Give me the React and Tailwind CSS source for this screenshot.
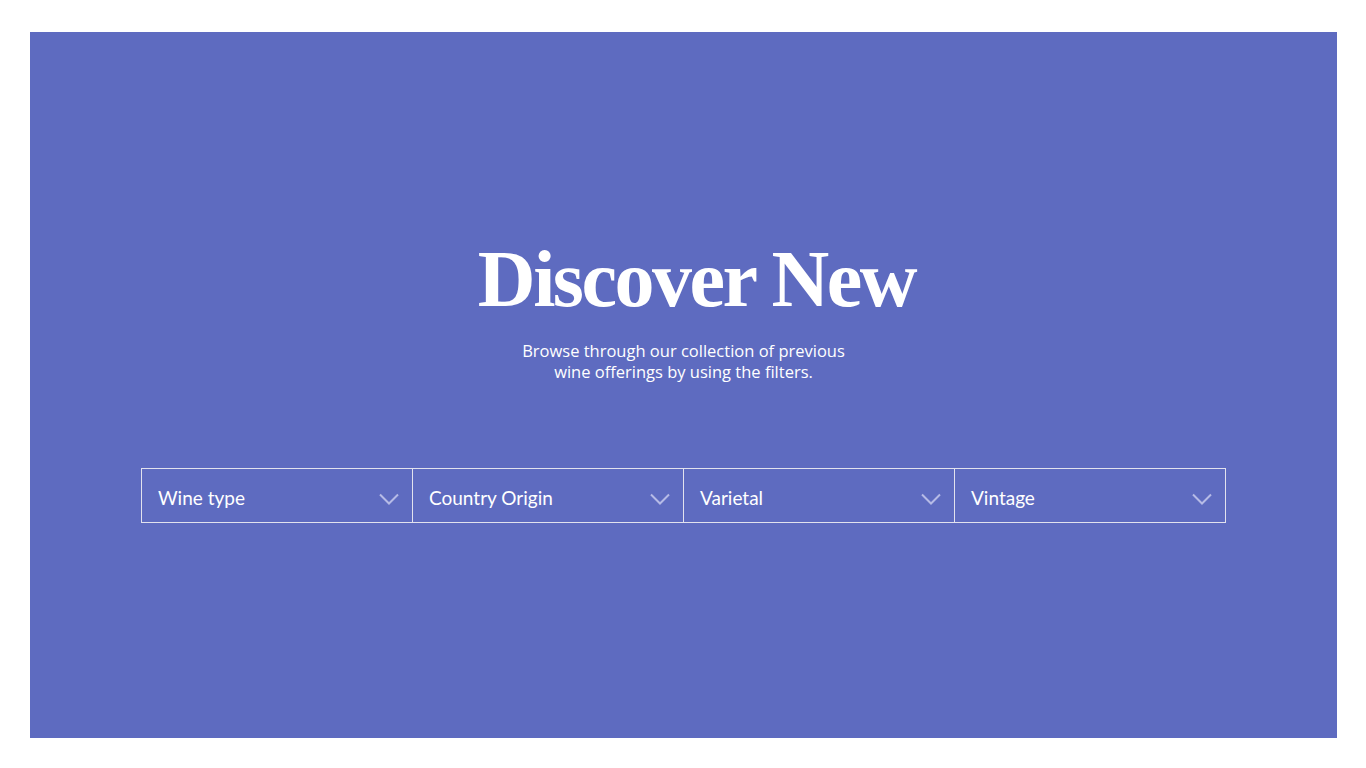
import React from "react";

function Chevron() {
  return (
    <svg width="20" height="12" viewBox="0 0 20 12" fill="none" className="shrink-0">
      <path d="M1 1.5 L10 10.5 L19 1.5" stroke="#b6bbe6" strokeWidth="2" />
    </svg>
  );
}

const filters = ["Wine type", "Country Origin", "Varietal", "Vintage"];

export default function App() {
  return (
    <div className="w-full h-screen bg-white pl-[30px] pr-[29px] pt-[32px] pb-[30px]">
      <div className="h-full bg-[#5e6bc0] flex flex-col items-center pt-[199px]">
        <h1
          className="text-white text-[80px] leading-[96px] font-bold tracking-[-2.5px] pl-[26px]"
          style={{ fontFamily: '"Liberation Serif", serif' }}
        >
          Discover New
        </h1>
        <p
          className="mt-[13px] text-white text-[16.5px] leading-[21px] text-center"
          style={{ fontFamily: '"Open Sans", Lato, sans-serif' }}
        >
          Browse through our collection of previous
          <br />
          wine offerings by using the filters.
        </p>
        <div className="mt-[86px] flex">
          {filters.map((f, i) => (
            <div
              key={f}
              className={`h-[55px] border-y border-l border-[#e2e2ee] flex items-center justify-between pl-[16px] pr-[13px] pt-[6px] ${i === 3 ? "border-r w-[272px]" : "w-[271px]"}`}
            >
              <span
                className="text-white text-[19px]"
                style={{ fontFamily: 'Lato, "Open Sans", sans-serif' }}
              >
                {f}
              </span>
              <Chevron />
            </div>
          ))}
        </div>
      </div>
    </div>
  );
}
